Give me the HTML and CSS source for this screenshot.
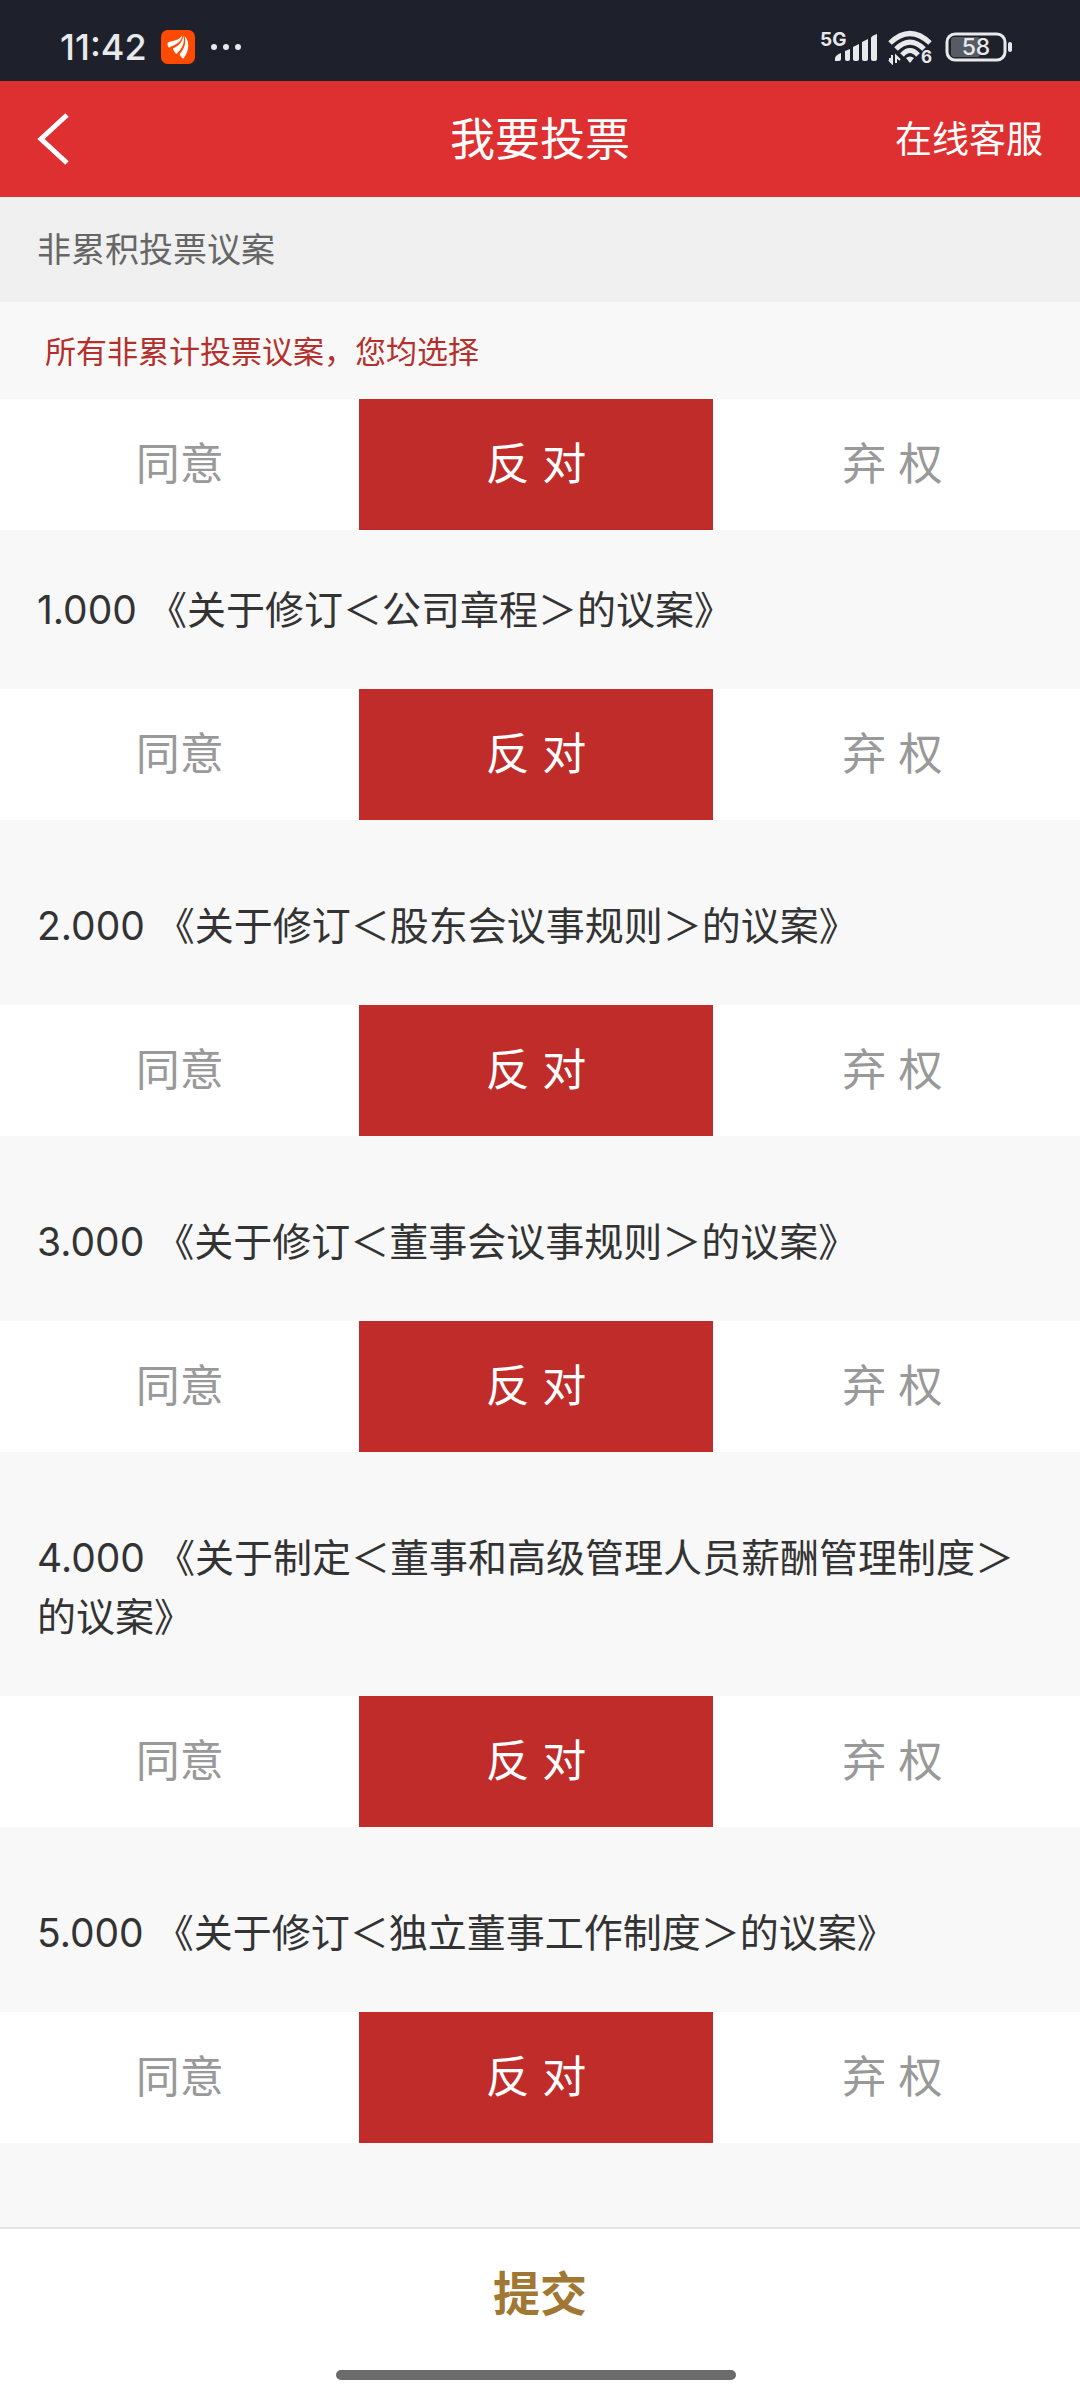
FILE: index.html
```html
<!DOCTYPE html>
<html lang="zh-CN">
<head>
<meta charset="utf-8">
<meta name="viewport" content="width=device-width, initial-scale=1">
<title>我要投票</title>
<link rel="stylesheet" href="styles.css">
</head>
<body>
<div class="status">
  <div class="status-side">
    <span class="clock">11:42</span>
    <svg class="app-icon" width="34" height="34" viewBox="0 0 102 102" aria-hidden="true">
      <rect width="102" height="102" rx="20" fill="#ff4a00"/>
      <g fill="#fff">
        <path d="M20 38C36 31 54 33 64 16C62 36 46 43 24 53C20 50 19 43 20 38Z"/>
        <path d="M36 55C51 48 64 39 67 17C73 38 63 56 46 72C41 68 36 61 36 55Z"/>
        <path d="M71 19C85 31 87 62 67 86C61 83 58 78 56 72C69 59 76 41 71 19Z"/>
      </g>
    </svg>
    <svg class="dots" width="32" height="8" viewBox="0 0 32 8" aria-hidden="true">
      <g fill="#e8e9eb"><circle cx="4" cy="4" r="3"/><circle cx="16" cy="4" r="3"/><circle cx="28" cy="4" r="3"/></g>
    </svg>
  </div>
  <div class="status-side">
    <svg width="60" height="36" viewBox="0 0 60 36" aria-hidden="true">
      <text class="net" x="0" y="17">5G</text>
      <g fill="#e8e9eb">
        <path d="M15 32V29Q16 26 21 24V30Q21 32 19 32Z"/>
        <path d="M25 22L30 20V30Q30 32 28 32H27Q25 32 25 30Z"/>
        <path d="M33 18L39 15V30Q39 32 37 32H35Q33 32 33 30Z"/>
        <path d="M42 13L48 10V30Q48 32 46 32H44Q42 32 42 30Z"/>
        <path d="M51 9Q51 7 57 5V30Q57 32 55 32H53Q51 32 51 30Z"/>
      </g>
    </svg>
    <svg class="wifi" width="46" height="36" viewBox="0 0 46 36" aria-hidden="true">
      <g fill="none" stroke="#e8e9eb" stroke-width="5">
        <path d="M2 14Q22 -5 42 14"/>
        <path d="M8 20Q22 6 36 20"/>
        <path d="M14 26Q22 17 30 26"/>
      </g>
      <path d="M18 29Q22 26 26 29L22 34Z" fill="#e8e9eb"/>
      <path d="M1 30H5M4 26V34L1 31M8 34V27L12 31M8 34V27" fill="none" stroke="#e8e9eb" stroke-width="2"/>
      <text class="wifi-gen" x="33" y="34">6</text>
    </svg>
    <svg class="battery" width="67" height="30" viewBox="0 0 67 30" aria-hidden="true">
      <rect x="6" y="5" width="29" height="20" rx="3" fill="#575b63"/>
      <rect x="2" y="2" width="58" height="26" rx="8" fill="none" stroke="#e8e9eb" stroke-width="3"/>
      <rect x="63" y="10" width="4" height="10" rx="2" fill="#e8e9eb"/>
      <text class="level" x="31" y="23" text-anchor="middle">58</text>
    </svg>
  </div>
</div>

<header class="header">
  <button class="back" type="button" aria-label="返回">
    <svg width="34" height="56" viewBox="0 0 34 56" aria-hidden="true"><path d="M30 4L4 28L30 52" fill="none" stroke="#fff" stroke-width="5"/></svg>
  </button>
  <h1 class="title">我要投票</h1>
  <a class="service" href="#service">在线客服</a>
</header>

<main class="main">
  <h2 class="section">非累积投票议案</h2>

  <p class="note" id="q0">所有非累计投票议案，您均选择</p>
  <div class="options" role="radiogroup" aria-labelledby="q0">
    <label class="option"><input type="radio" name="all"><span>同意</span></label>
    <label class="option"><input type="radio" name="all" checked><span>反 对</span></label>
    <label class="option"><input type="radio" name="all"><span>弃 权</span></label>
  </div>

  <section class="motion">
    <h3 class="motion-title" id="q1">1.000 《关于修订＜公司章程＞的议案》</h3>
    <div class="options" role="radiogroup" aria-labelledby="q1">
      <label class="option"><input type="radio" name="m1"><span>同意</span></label>
      <label class="option"><input type="radio" name="m1" checked><span>反 对</span></label>
      <label class="option"><input type="radio" name="m1"><span>弃 权</span></label>
    </div>
  </section>

  <section class="motion">
    <h3 class="motion-title" id="q2">2.000 《关于修订＜股东会议事规则＞的议案》</h3>
    <div class="options" role="radiogroup" aria-labelledby="q2">
      <label class="option"><input type="radio" name="m2"><span>同意</span></label>
      <label class="option"><input type="radio" name="m2" checked><span>反 对</span></label>
      <label class="option"><input type="radio" name="m2"><span>弃 权</span></label>
    </div>
  </section>

  <section class="motion">
    <h3 class="motion-title" id="q3">3.000 《关于修订＜董事会议事规则＞的议案》</h3>
    <div class="options" role="radiogroup" aria-labelledby="q3">
      <label class="option"><input type="radio" name="m3"><span>同意</span></label>
      <label class="option"><input type="radio" name="m3" checked><span>反 对</span></label>
      <label class="option"><input type="radio" name="m3"><span>弃 权</span></label>
    </div>
  </section>

  <section class="motion">
    <h3 class="motion-title" id="q4">4.000 《关于制定＜董事和高级管理人员薪酬管理制度＞的议案》</h3>
    <div class="options" role="radiogroup" aria-labelledby="q4">
      <label class="option"><input type="radio" name="m4"><span>同意</span></label>
      <label class="option"><input type="radio" name="m4" checked><span>反 对</span></label>
      <label class="option"><input type="radio" name="m4"><span>弃 权</span></label>
    </div>
  </section>

  <section class="motion">
    <h3 class="motion-title" id="q5">5.000 《关于修订＜独立董事工作制度＞的议案》</h3>
    <div class="options" role="radiogroup" aria-labelledby="q5">
      <label class="option"><input type="radio" name="m5"><span>同意</span></label>
      <label class="option"><input type="radio" name="m5" checked><span>反 对</span></label>
      <label class="option"><input type="radio" name="m5"><span>弃 权</span></label>
    </div>
  </section>
</main>

<footer class="footer">
  <button class="submit" type="button">提交</button>
  <div class="home-bar"></div>
</footer>
</body>
</html>
```
FILE: styles.css
```css
* {
  box-sizing: border-box;
}

body {
  display: flex;
  flex-direction: column;
  min-height: 100vh;
  margin: 0;
  background: #f8f8f8;
  color: #333;
  font-family: Inter, "Noto Sans CJK SC", sans-serif;
  text-spacing-trim: space-all;
}

h1, h2, h3, p {
  margin: 0;
  font-weight: 400;
}

button {
  padding: 0;
  border: 0;
  background: none;
  font: inherit;
}

/* Status bar */
.status {
  display: flex;
  justify-content: space-between;
  height: 81px;
  padding: 12px 68px 0 60px;
  background: #1e212b;
}

.status-side {
  display: flex;
  align-items: center;
}

.clock {
  color: #e8e9eb;
  font-size: 36px;
  font-weight: 500;
  line-height: 48px;
}

.app-icon {
  margin-left: 14px;
}

.dots {
  margin-left: 15px;
}

.wifi {
  margin-left: 8px;
}

.battery {
  margin-left: 11px;
}

.status text {
  fill: #e8e9eb;
  font-weight: 700;
}

.net {
  font-size: 19px;
}

.wifi-gen {
  font-size: 17px;
}

.status .level {
  font-size: 23px;
  font-weight: 500;
}

/* Title bar */
.header {
  display: grid;
  grid-template-columns: 1fr auto 1fr;
  align-items: center;
  height: 116px;
  padding: 0 37px;
  background: #df3031;
  color: #fff;
}

.back {
  display: flex;
  justify-self: start;
}

.title,
.service {
  padding-bottom: 5px;
}

.title {
  font-size: 45px;
}

.service {
  justify-self: end;
  color: inherit;
  font-size: 37px;
  text-decoration: none;
}

/* Motions */
.main {
  flex: 1;
}

.section {
  padding: 0 37px;
  background: #f0f0f0;
  color: #666;
  font-size: 34px;
  line-height: 105px;
}

.note {
  padding: 2px 45px 0;
  color: #b3302c;
  font-size: 31px;
  line-height: 95px;
}

.motion + .motion {
  margin-top: 26px;
}

.motion-title {
  padding: 50px 37px;
  font-size: 39px;
  line-height: 59px;
}

.options {
  display: flex;
  height: 131px;
  padding-right: 8px;
  background: #fff;
}

.option {
  position: relative;
  display: flex;
  flex: 61;
}

.option:nth-child(2) {
  flex: 60;
}

.option input {
  position: absolute;
  inset: 0;
  margin: 0;
  opacity: 0;
}

.option span {
  display: flex;
  flex: 1;
  align-items: center;
  justify-content: center;
  padding-bottom: 8px;
  color: #999;
  font-size: 44px;
}

.option input:checked + span {
  background: #bf2c2a;
  color: #fff;
}

/* Submit bar */
.footer {
  display: flex;
  flex-direction: column;
  align-items: center;
  height: 173px;
  border-top: 2px solid #e5e5e5;
  background: #fff;
}

.submit {
  width: 100%;
  height: 128px;
  padding-bottom: 6px;
  color: #a17833;
  font-size: 47px;
  font-weight: 700;
}

.home-bar {
  width: 37%;
  height: 10px;
  margin: 13px 8px 0 0;
  border-radius: 5px;
  background: #6b6b6b;
}
```
